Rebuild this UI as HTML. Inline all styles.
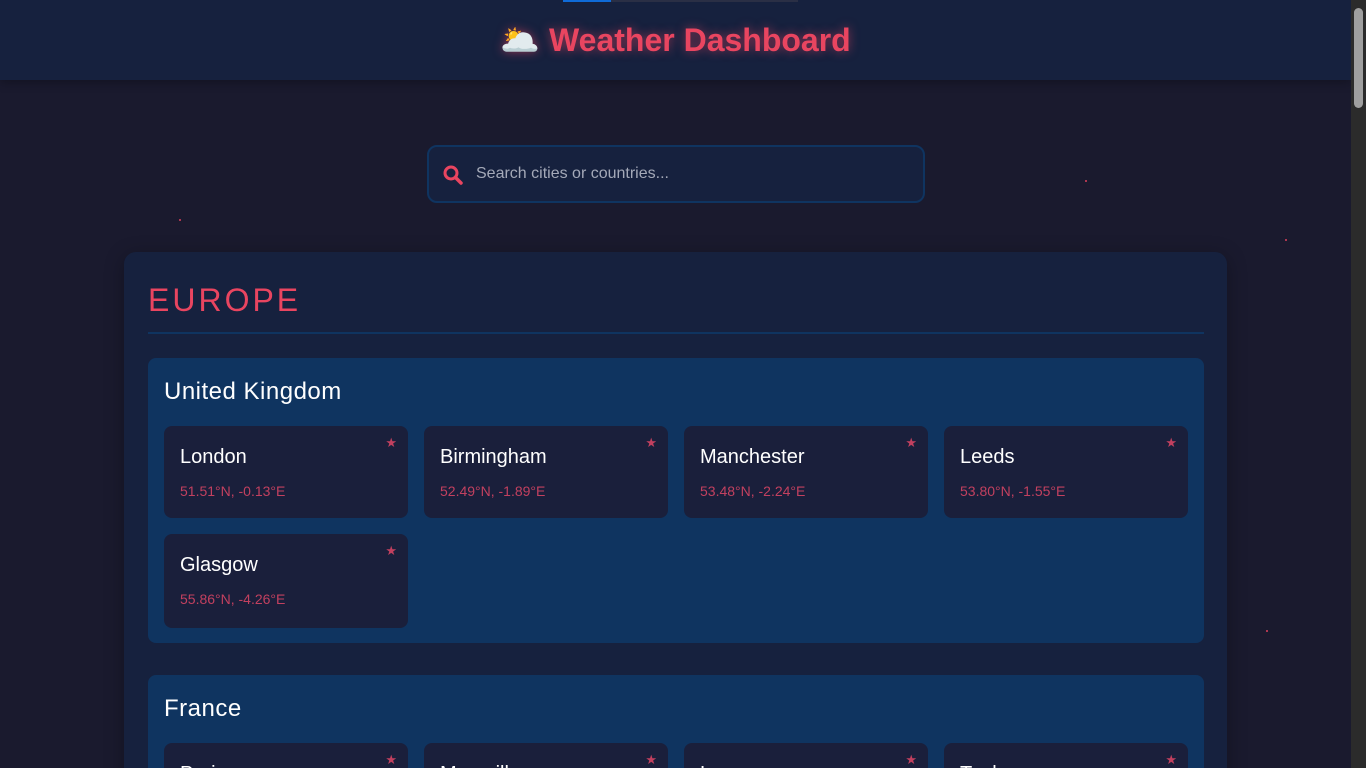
<!DOCTYPE html>
<html><head><meta charset="utf-8"><style>
*{box-sizing:border-box;margin:0;padding:0}
html,body{width:1366px;height:768px;overflow:hidden}
body{background:#1a1a2e;font-family:"Liberation Sans","DejaVu Sans",sans-serif;color:#eee}
#w{position:relative;width:1366px;height:768px;overflow:hidden}
.sb{position:absolute;right:0;top:0;width:15px;height:768px;background:#2b2b2b}
.sb div{position:absolute;left:3px;top:8px;width:9px;height:100px;background:#9f9f9f;border-radius:5px}
header{position:absolute;left:0;top:0;width:1351px;height:80px;background:#16213e;box-shadow:0 2px 10px rgba(0,0,0,.3)}
.pb1{position:absolute;left:563px;top:0;width:48px;height:2px;background:#0f6bd8}
.pb2{position:absolute;left:611px;top:0;width:187px;height:2px;background:#2a2f45}
h1{position:absolute;top:21px;left:0;width:1351px;text-align:center;font-size:32px;font-weight:bold;color:#e94560;text-shadow:0 0 10px rgba(233,69,96,.6)}
.search{position:absolute;left:427px;top:145px;width:498px;height:58px;border:2px solid #0f3460;border-radius:10px;background:#16213e}
.search span{position:absolute;left:47px;top:18px;font-size:16px;color:#a4a9b8}
.search svg{position:absolute;left:14px;top:18px}
.eu{position:absolute;left:124px;top:252px;width:1103px;height:600px;background:#16213e;border-radius:12px;box-shadow:0 4px 20px rgba(0,0,0,.3)}
.eu h2{position:absolute;left:24px;top:30px;font-size:32px;font-weight:normal;letter-spacing:3px;color:#e94560}
.eu .line{position:absolute;left:24px;top:80px;width:1056px;height:2px;background:#0f3460}
.country{position:absolute;left:24px;width:1056px;background:#0f3460;border-radius:8px}
.country h3{position:absolute;left:16px;top:20px;font-size:24px;font-weight:normal;color:#fff;letter-spacing:.5px}
.city{position:absolute;width:244px;height:92px;background:#1a1f3b;border-radius:8px}
.city b{position:absolute;left:16px;top:20px;font-size:20px;font-weight:normal;color:#fff}
.city i{position:absolute;left:16px;top:57px;font-size:14px;font-style:normal;color:#c2405f}
.city s{position:absolute;right:11px;top:9px;font-size:13px;text-decoration:none;color:#c2405f}
.dot{position:absolute;width:2px;height:2px;background:#e94560;opacity:.7}
</style></head><body><div id="w">
<header><div class="pb1"></div><div class="pb2"></div><h1>🌥️ Weather Dashboard</h1></header>
<div class="dot" style="left:179px;top:219px"></div><div class="dot" style="left:1085px;top:180px"></div><div class="dot" style="left:1285px;top:239px"></div><div class="dot" style="left:1266px;top:630px"></div>
<div class="search"><svg width="20" height="20" viewBox="0 0 20 20"><circle cx="8" cy="8" r="6" fill="none" stroke="#e94560" stroke-width="3"/><line x1="12.5" y1="12.5" x2="18" y2="18" stroke="#e94560" stroke-width="3.5" stroke-linecap="round"/></svg><span>Search cities or countries...</span></div>
<div class="eu"><h2>EUROPE</h2><div class="line"></div>
<div class="country" style="top:106px;height:285px"><h3>United Kingdom</h3>
<div class="city" style="left:16px;top:68px"><b>London</b><i>51.51°N, -0.13°E</i><s>★</s></div>
<div class="city" style="left:276px;top:68px"><b>Birmingham</b><i>52.49°N, -1.89°E</i><s>★</s></div>
<div class="city" style="left:536px;top:68px"><b>Manchester</b><i>53.48°N, -2.24°E</i><s>★</s></div>
<div class="city" style="left:796px;top:68px"><b>Leeds</b><i>53.80°N, -1.55°E</i><s>★</s></div>
<div class="city" style="left:16px;top:176px;height:94px"><b>Glasgow</b><i>55.86°N, -4.26°E</i><s>★</s></div>
</div>
<div class="country" style="top:423px;height:170px"><h3>France</h3>
<div class="city" style="left:16px;top:68px"><b>Paris</b><s>★</s></div>
<div class="city" style="left:276px;top:68px"><b>Marseille</b><s>★</s></div>
<div class="city" style="left:536px;top:68px"><b>Lyon</b><s>★</s></div>
<div class="city" style="left:796px;top:68px"><b>Toulouse</b><s>★</s></div>
</div></div>
<div class="sb"><div></div></div>
</div></body></html>
